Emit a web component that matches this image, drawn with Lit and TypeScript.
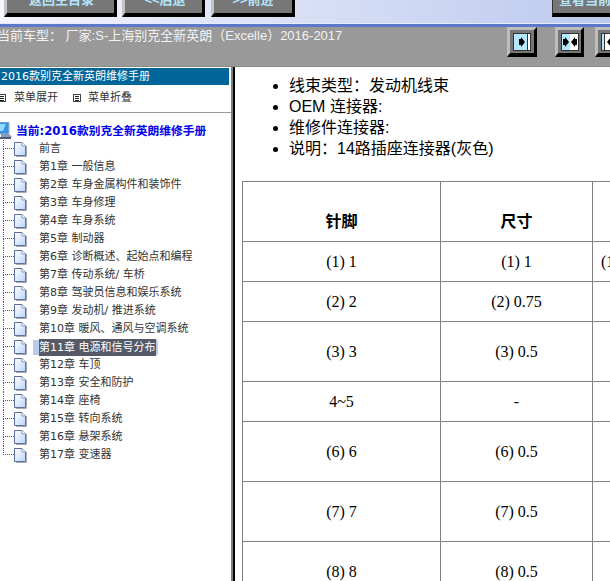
import { LitElement, html, css, svg } from "lit";
import { customElement } from "lit/decorators.js";

const chapters = [
  "前言",
  "第1章 一般信息",
  "第2章 车身金属构件和装饰件",
  "第3章 车身修理",
  "第4章 车身系统",
  "第5章 制动器",
  "第6章 诊断概述、起始点和编程",
  "第7章 传动系统/ 车桥",
  "第8章 驾驶员信息和娱乐系统",
  "第9章 发动机/ 推进系统",
  "第10章 暖风、通风与空调系统",
  "第11章 电源和信号分布",
  "第12章 车顶",
  "第13章 安全和防护",
  "第14章 座椅",
  "第15章 转向系统",
  "第16章 悬架系统",
  "第17章 变速器",
];

// pin, size, third column, row height
const rows = [
  ["(1) 1", "(1) 1", "(1)", 40],
  ["(2) 2", "(2) 0.75", "", 40],
  ["(3) 3", "(3) 0.5", "", 60],
  ["4~5", "-", "", 40],
  ["(6) 6", "(6) 0.5", "", 60],
  ["(7) 7", "(7) 0.5", "", 60],
  ["(8) 8", "(8) 0.5", "", 60],
];

const pageIcon = svg`<svg width="13" height="15" viewBox="0 0 13 15">
  <defs><linearGradient id="pg" x1="0" y1="0" x2="1" y2="1">
    <stop offset="0" stop-color="#ffffff"/><stop offset="1" stop-color="#bcd6fa"/>
  </linearGradient></defs>
  <path d="M2 14.500H12.500V4" fill="none" stroke="#a9a9b4" stroke-width="1"/>
  <path d="M.5 .5H8L11.500 4V13.500H.5Z" fill="url(#pg)" stroke="#5f6f9c"/>
  <path d="M8 .5V4H11.500" fill="#fff" stroke="#8797c0"/>
</svg>`;

const pcIcon = svg`<svg width="13" height="17" viewBox="0 0 13 17">
  <rect x="-1" y="0" width="10" height="12" rx="1" fill="#3f8fe0" stroke="#9db4cc"/>
  <path d="M0 2H6L3 9H0Z" fill="#8fdcff"/>
  <path d="M1 12H9L12 15H1Z" fill="#8a9ab4"/>
  <rect x="0" y="15" width="11" height="2" fill="#4d5a7c"/>
</svg>`;

const boxIcon = (cls: string) => svg`<svg class=${cls} width="8" height="8" viewBox="0 0 8 8">
  <rect x=".5" y=".5" width="7" height="7" fill="#fff" stroke="#444"/>
  <path d="M2 2.500H6M2 4.500H6M2 6.500H6" stroke="#222"/>
</svg>`;

// right arrow with its stem on the left, left arrow mirrored
const arrowR = "M0 5H2V3L6 8L2 13V11H0Z";
const arrowL = "M16 5H14V3L10 8L14 13V11H16Z";

function tool(kind: string) {
  return html`<span class="tool ${kind}">
    <span class="glass">
      ${kind === "one"
        ? svg`<svg width="16" height="16" viewBox="0 0 16 16"><path transform="translate(5 0)" d=${arrowR} fill="#000"/></svg>`
        : kind === "two"
          ? svg`<svg width="16" height="16" viewBox="0 0 16 16"><path transform="translate(1 0)" d=${arrowR} fill="#000"/><path transform="translate(-1 0)" d=${arrowL} fill="#000"/></svg>`
          : svg`<svg width="16" height="16" viewBox="0 0 16 16"><path transform="translate(-5 0)" d=${arrowL} fill="#000"/></svg>`}
    </span>
  </span>`;
}

@customElement("app-root")
export class AppRoot extends LitElement {
  static styles = css`
    :host {
      display: block;
      width: 610px;
      height: 581px;
      overflow: hidden;
      background: #fff;
      font-family: "Liberation Sans", "Noto Sans CJK SC", sans-serif;
    }
    .top {
      height: 27px;
      display: flex;
      align-items: flex-end;
      overflow: hidden;
      background: linear-gradient(90deg, #f4f5fe, #bccaed);
      padding-bottom: 7px;
      box-sizing: border-box;
      border-bottom: 3px solid #5b78c9;
      box-shadow: inset 0 -1px 0 #e6eafa;
    }
    .btn {
      flex: none;
      height: 28px;
      box-sizing: border-box;
      background: #777;
      border-style: solid;
      border-width: 1px 3px 4px 3px;
      border-color: #555 #000 #000 #c4c4c4;
      color: #b3e4fb;
      font-size: 13px;
      font-weight: bold;
      display: flex;
      align-items: center;
      justify-content: center;
      padding-bottom: 6px;
      white-space: nowrap;
    }
    .b1 { width: 113px; margin-left: 4px; padding-left: 2px; }
    .b2 { width: 83px; margin-left: 5px; padding-left: 3px; }
    .b3 { width: 84px; margin-left: 6px; }
    .b4 {
      width: 100px;
      margin-left: 257px;
      border-left: 1px solid #333;
      justify-content: flex-start;
      padding-left: 6px;
    }
    .bar {
      height: 40px;
      box-sizing: border-box;
      background: #999;
      border-bottom: 1px solid #8a8a8a;
      display: flex;
      justify-content: space-between;
    }
    .car {
      color: #f2f2f2;
      font-size: 13px;
      line-height: 16px;
      margin: 1px 0 0 -3px;
      white-space: nowrap;
    }
    .tools {
      display: flex;
      flex: none;
      width: 103px;
      overflow: hidden;
      height: 30px;
    }
    .tool {
      flex: none;
      width: 30px;
      height: 30px;
      box-sizing: border-box;
      background: #777;
      border-style: solid;
      border-width: 3px 3px 4px 3px;
      border-color: #bdbdbd #000 #000 #bdbdbd;
      display: flex;
      align-items: center;
      justify-content: center;
    }
    .tool.two { margin-left: 18px; width: 29px; }
    .tool.three { margin-left: 11px; }
    .glass {
      width: 18px;
      height: 18px;
      box-sizing: border-box;
      border: 1px solid #333;
      display: flex;
      align-items: center;
      justify-content: center;
      background: linear-gradient(90deg, #b4e6fd 80%, #333 80%, #333 86%, #fff 86%);
    }
    .two .glass { background: linear-gradient(90deg, #b4e6fd 50%, #fff 50%); }
    .three .glass { background: linear-gradient(90deg, #b4e6fd 10%, #333 10%, #333 16%, #fff 16%); }
    .main {
      display: flex;
      height: 514px;
      overflow: hidden;
    }
    .side {
      flex: none;
      width: 231px;
      box-sizing: border-box;
      padding-top: 1px;
      font-family: "DejaVu Sans", "Noto Sans CJK SC", sans-serif;
      font-size: 11px;
      color: #333;
      overflow: hidden;
    }
    .title {
      width: 229px;
      height: 17px;
      background: #006699;
      color: #fff;
      font-size: 11px;
      line-height: 17px;
      white-space: nowrap;
      padding-left: 1px;
      box-sizing: border-box;
    }
    .menu {
      height: 28px;
      box-sizing: border-box;
      border-bottom: 1px solid #999;
      display: flex;
      align-items: flex-start;
      padding-top: 5px;
      margin-bottom: 7px;
      line-height: 16px;
    }
    .menu svg { flex: none; margin-top: 4px; }
    .menu span { margin-left: 8px; }
    .menu .m1 { margin-left: -2px; }
    .menu .m2 { margin-left: 15px; }
    .menu .m2 + span { margin-left: 7px; }
    .root {
      display: flex;
      height: 18px;
      align-items: center;
      color: #0000ee;
      font-weight: bold;
      white-space: nowrap;
      font-size: 11.750px;
      margin-bottom: 2px;
    }
    .root svg { flex: none; margin: 2px 3px 0 0; }
    .tree { margin-left: 3px; }
    .row {
      display: flex;
      height: 18px;
      white-space: nowrap;
    }
    .conn {
      flex: none;
      width: 11px;
      display: grid;
      grid-template-rows: 9px 9px;
    }
    .up { border-left: 1px dotted #555; border-bottom: 1px dotted #555; }
    .down { border-left: 1px dotted #555; }
    .row.last .down { border-left: none; }
    .row svg { flex: none; margin-top: 2px; }
    .label {
      margin-left: 12px;
      line-height: 18px;
    }
    .row.on .label {
      margin-left: 6px;
      align-self: center;
      height: 15px;
      line-height: 15px;
      padding: 0 2px 0 6px;
      background: #b9cdea;
      display: flex;
      align-items: center;
    }
    .row.on b {
      font-weight: normal;
      height: 17px;
      line-height: 17px;
      background: #555a66;
      color: #fff;
    }
    .split {
      flex: none;
      width: 4px;
      background: linear-gradient(90deg, #808080 50%, #000 50%);
    }
    .doc {
      flex: 1;
      min-width: 0;
      padding: 8px 0 0 7px;
      overflow: hidden;
    }
    ul {
      margin: 0 0 22px;
      padding: 0 0 0 47px;
      font-size: 16px;
      line-height: 21px;
      color: #000;
      white-space: nowrap;
    }
    table {
      border-collapse: collapse;
      table-layout: fixed;
      width: 500px;
      font-family: "Liberation Serif", "Noto Sans CJK SC", serif;
      font-size: 16px;
      color: #000;
    }
    th, td {
      border: 1px solid #808080;
      text-align: center;
      padding: 0;
    }
    th { height: 60px; padding-top: 16px; box-sizing: border-box; }
    td.left { text-align: left; padding-left: 8px; }
  `;

  render() {
    return html`
      <div class="top">
        <div class="btn b1">返回主目录</div>
        <div class="btn b2">&lt;&lt;后退</div>
        <div class="btn b3">&gt;&gt;前进</div>
        <div class="btn b4">查看当前</div>
      </div>
      <div class="bar">
        <p class="car">当前车型： 厂家:S-上海别克全新英朗（Excelle）2016-2017</p>
        <div class="tools">${tool("one")}${tool("two")}${tool("three")}</div>
      </div>
      <div class="main">
        <div class="side">
          <div class="title">2016款别克全新英朗维修手册</div>
          <div class="menu">
            ${boxIcon("m1")}
            <span>菜单展开</span>
            ${boxIcon("m2")}
            <span>菜单折叠</span>
          </div>
          <div class="root">${pcIcon}当前:2016款别克全新英朗维修手册</div>
          <div class="tree">
            ${chapters.map(
              (c, i) => html`<div class="row ${i === 11 ? "on" : ""} ${i === chapters.length - 1 ? "last" : ""}">
                <div class="conn"><div class="up"></div><div class="down"></div></div>
                ${pageIcon}
                <span class="label">${i === 11 ? html`<b>${c}</b>` : c}</span>
              </div>`
            )}
          </div>
        </div>
        <div class="split"></div>
        <div class="doc">
          <ul>
            <li>线束类型：发动机线束</li>
            <li>OEM 连接器:</li>
            <li>维修件连接器:</li>
            <li>说明：14路插座连接器(灰色)</li>
          </ul>
          <table>
            <colgroup><col style="width:198px" /><col style="width:152px" /><col /></colgroup>
            <tr><th>针脚</th><th>尺寸</th><th></th></tr>
            ${rows.map(
              (r) => html`<tr style="height:${r[3]}px">
                <td>${r[0]}</td><td>${r[1]}</td><td class="left">${r[2]}</td>
              </tr>`
            )}
          </table>
        </div>
      </div>
    `;
  }
}
